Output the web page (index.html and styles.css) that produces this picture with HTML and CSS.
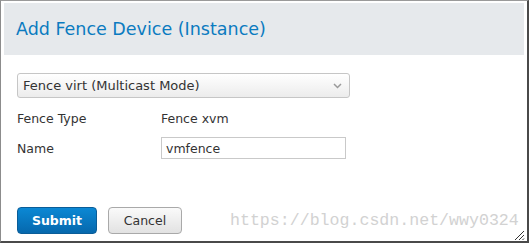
FILE: index.html
```html
<!DOCTYPE html>
<html>
<head>
<meta charset="utf-8">
<link rel="stylesheet" href="styles.css">
</head>
<body>
<div class="frame">
  <div class="header"><h1 class="title">Add Fence Device (Instance)</h1></div>
  <div class="content">
    <div class="select">
      <span class="select-text">Fence virt (Multicast Mode)</span>
      <svg class="chevron" width="9" height="6" viewBox="0 0 9 6"><path d="M1 1 L4.5 4.5 L8 1" fill="none" stroke="#9a9a9a" stroke-width="1.5"/></svg>
    </div>
    <div class="form">
      <div class="label">Fence Type</div>
      <div class="value">Fence xvm</div>
      <div class="label">Name</div>
      <div class="value"><div class="input">vmfence</div></div>
    </div>
    <div class="actions">
      <button class="btn btn-primary">Submit</button>
      <button class="btn btn-default">Cancel</button>
      <span class="watermark">https://blog.csdn.net/wwy0324</span>
    </div>
  </div>
  <svg class="grip" width="12" height="12" viewBox="0 0 12 12"><path d="M2 11 L11 2 M6 11 L11 6 M9.5 11 L11 9.5" stroke="#333" stroke-width="1"/></svg>
</div>
</body>
</html>
```
FILE: styles.css
```css
html, body { margin: 0; padding: 0; background: #fff; }
.frame {
  position: relative;
  width: 529px; height: 243px; box-sizing: border-box;
  border-left: 1px solid #8c8c8c; border-top: 1px solid #9a9a9a;
  border-right: 2px solid #4a4a4a; border-bottom: 2px solid #4a4a4a;
  padding: 2px 3px 0 3px;
  font-family: "DejaVu Sans", sans-serif; color: #333;
  overflow: hidden;
}
.header { background: #e6e9ec; height: 52px; display: flex; align-items: center; padding-left: 12px; }
.title { margin: 0; font-weight: normal; font-size: 17.5px; color: #0b7bc0; }
.content { padding: 18px 0 0 13px; }
.select {
  width: 333px; height: 25px; box-sizing: border-box;
  border: 1px solid #c6c6c6; border-radius: 3px;
  background: linear-gradient(#ffffff, #ececec);
  display: flex; align-items: center; justify-content: space-between;
  padding: 0 7px 0 5px;
  font-size: 13px; color: #333;
}
.form { display: grid; grid-template-columns: 144px 185px; grid-auto-rows: 30px; align-items: center; margin-top: 5px; font-size: 12.5px; }
.input {
  width: 185px; height: 22px; box-sizing: border-box; border: 1px solid #c9c9c9;
  display: flex; align-items: center; padding-left: 4px;
}
.actions { display: flex; align-items: center; margin-top: 44px; }
.btn {
  height: 27px; box-sizing: border-box; border-radius: 4px; font-family: "DejaVu Sans", sans-serif; font-size: 12.5px; padding: 0;
}
.btn-primary { width: 80px; color: #fff; font-weight: bold; border: 1px solid #0a5d98; background: linear-gradient(#0b88d4, #0668ad); }
.btn-default { width: 74px; margin-left: 11px; color: #333; border: 1px solid #a9a9a9; background: linear-gradient(#fafafa, #e2e2e2); }
.watermark { margin-left: 48px; font-family: "Liberation Mono", monospace; font-size: 16.6px; color: #d2d2d2; }
.grip { position: absolute; right: 2px; bottom: 0px; }
```
